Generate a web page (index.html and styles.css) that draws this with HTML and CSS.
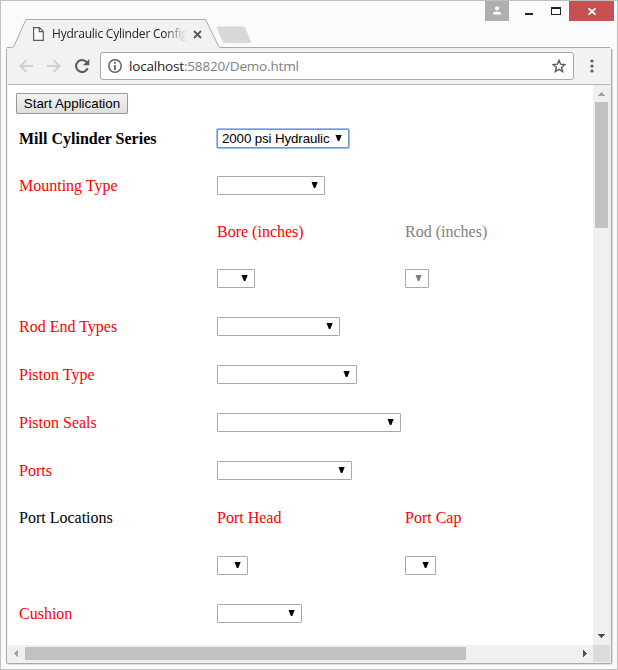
FILE: index.html
```html
<!DOCTYPE html>
<html lang="en">
<head>
<meta charset="utf-8">
<title>Hydraulic Cylinder Config</title>
<link rel="stylesheet" href="styles.css">
</head>
<body>
<svg class="defs" width="0" height="0"><symbol id="arrow" viewBox="0 0 7 7"><path d="M.5 0H6.700L4.300 6H2.900Z" fill="currentColor"/></symbol></svg>
<div class="window">
  <header class="titlebar">
    <svg class="tabshape" width="606" height="30" viewBox="0 0 606 30">
      <path d="M0 30V28.500H5.500Q7.500 28.500 8.500 26L20 .5H199.500L212.500 27Q213.200 28.500 215 28.500H606V30Z" fill="#f2f2f2"/>
      <path d="M1 28.500H5.500Q7.500 28.500 8.500 26L20 .5H199.500L212.500 27Q213.200 28.500 215 28.500H604" fill="none" stroke="#a9a9a9"/>
      <path d="M213 7.500H236Q238.500 7.500 239.500 9.500L244.500 22Q245 24 243.500 24H219.500Q217.500 24 216.500 22L211 9.500Q210.500 7.500 213 7.500Z" fill="#d8d8d8" stroke="#e6e6e6" stroke-width=".6"/>
    </svg>
    <div class="tab">
      <svg width="11" height="14" viewBox="0 0 11 14"><path d="M.6 .6H6.500L10.300 4.400V13.400H.6ZM6.300 .6V4.600H10.300" fill="#fafafa" stroke="#5a5a5a" stroke-width="1.200"/></svg>
      <span class="tabtitle">Hydraulic Cylinder Config</span>
      <svg width="9" height="9" viewBox="0 0 9 9"><path d="M1 1L8 8M8 1L1 8" stroke="#5a5a5a" stroke-width="1.900"/></svg>
    </div>
    <div class="controls">
      <span class="user"><svg width="8" height="9" viewBox="0 0 8 9"><circle cx="4" cy="2.200" r="2" fill="#fff"/><path d="M0 8.500V7Q.4 5.400 4 5.400T8 7V8.500Z" fill="#fff"/></svg></span>
      <span class="min"></span>
      <span class="max"></span>
      <span class="close"><svg width="8" height="7" viewBox="0 0 8 7"><path d="M.5 .3L7.500 6.700M7.500 .3L.5 6.700" stroke="#fff" stroke-width="1.800"/></svg></span>
    </div>
  </header>
  <div class="frame">
    <div class="toolbar">
      <svg class="back" width="14" height="14" viewBox="0 0 14 14"><path d="M14 7H1.500M7.500 1L1.500 7L7.500 13" fill="none" stroke="#d0d0d0" stroke-width="1.800"/></svg>
      <svg class="fwd" width="14" height="14" viewBox="0 0 14 14"><path d="M0 7H12.500M6.500 1L12.500 7L6.500 13" fill="none" stroke="#d0d0d0" stroke-width="1.800"/></svg>
      <svg class="reload" width="15" height="14" viewBox="0 0 15 14"><path d="M12.700 9.200A6 6 0 1 1 11.700 3.200" fill="none" stroke="#5a5a5a" stroke-width="2"/><path d="M14.300 0V6.300H8Z" fill="#5a5a5a"/></svg>
      <div class="address">
        <svg width="14" height="14" viewBox="0 0 14 14"><circle cx="7" cy="7" r="6.200" fill="none" stroke="#5a5a5a" stroke-width="1.400"/><path d="M7 3V4.700M7 6V11" stroke="#5a5a5a" stroke-width="1.700"/></svg>
        <span class="url"><b>localhost</b>:58820/Demo.html</span>
        <svg class="star" width="14" height="14" viewBox="0 0 14 14"><path d="M7 1.300L8.600 5.200L12.900 5.500L9.600 8.300L10.700 12.600L7 10.300L3.300 12.600L4.400 8.300L1.100 5.500L5.400 5.200Z" fill="none" stroke="#5a5a5a" stroke-width="1.400"/></svg>
      </div>
      <svg class="menu" width="4" height="14" viewBox="0 0 4 14" fill="#5a5a5a"><circle cx="2" cy="2" r="1.600"/><circle cx="2" cy="7" r="1.600"/><circle cx="2" cy="12" r="1.600"/></svg>
    </div>
    <div class="view">
      <main class="page">
        <button class="start">Start Application</button>
        <div class="form">
          <span class="head">Mill Cylinder Series</span><span class="select focus w132">2000 psi Hydraulic<svg><use href="#arrow"/></svg></span><i></i>
          <span class="req">Mounting Type</span><span class="select w108"><svg><use href="#arrow"/></svg></span><i></i>
          <i></i><span class="req">Bore (inches)</span><span class="off">Rod (inches)</span>
          <i></i><span class="select w38"><svg><use href="#arrow"/></svg></span><span class="select w24 off"><svg><use href="#arrow"/></svg></span>
          <span class="req">Rod End Types</span><span class="select w123"><svg><use href="#arrow"/></svg></span><i></i>
          <span class="req">Piston Type</span><span class="select w140"><svg><use href="#arrow"/></svg></span><i></i>
          <span class="req">Piston Seals</span><span class="select w184"><svg><use href="#arrow"/></svg></span><i></i>
          <span class="req">Ports</span><span class="select w135"><svg><use href="#arrow"/></svg></span><i></i>
          <span>Port Locations</span><span class="req">Port Head</span><span class="req">Port Cap</span>
          <i></i><span class="select w31"><svg><use href="#arrow"/></svg></span><span class="select w31"><svg><use href="#arrow"/></svg></span>
          <span class="req">Cushion</span><span class="select w85"><svg><use href="#arrow"/></svg></span><i></i>
        </div>
      </main>
      <div class="vbar"><svg width="7" height="4" shape-rendering="crispEdges"><path d="M0 4L3.500 0L7 4Z" fill="#a3a3a3"/></svg><div class="vthumb"></div><svg class="down" width="7" height="4" shape-rendering="crispEdges"><path d="M0 0H7L3.500 4Z" fill="#505050"/></svg></div>
      <div class="hbar"><svg width="4" height="7" shape-rendering="crispEdges"><path d="M4 0V7L0 3.500Z" fill="#a3a3a3"/></svg><div class="hthumb"></div><svg class="right" width="4" height="7" shape-rendering="crispEdges"><path d="M0 0V7L4 3.500Z" fill="#505050"/></svg></div>
      <div class="corner"></div>
    </div>
  </div>
</div>
</body>
</html>
```
FILE: styles.css
```css
* { box-sizing: border-box; }
body { margin: 0; background: #fbfbfb; }
svg { display: block; flex: none; }
.defs { position: absolute; }
.window { width: 618px; height: 670px; border: 1px solid #c0c0c0; padding: 0 5px; background: #fbfbfb; }
.titlebar { position: relative; height: 47px; display: flex; justify-content: space-between; }
.tabshape { position: absolute; left: 0; top: 18px; }
.tab { position: relative; display: flex; align-items: center; height: 20px; margin: 23px 0 0 27px; }
.tabtitle { width: 137px; margin: 0 4px 0 8px; white-space: nowrap; font: 12px/18px "Open Sans", sans-serif; letter-spacing: -.22px; color: #222; -webkit-mask-image: linear-gradient(90deg, #000 112px, transparent 135px); mask-image: linear-gradient(90deg, #000 112px, transparent 135px); }
.controls { display: flex; height: 20px; margin-right: -2px; }
.user { width: 24px; background: #afafaf; display: flex; justify-content: center; padding-top: 5px; }
.min { width: 8px; height: 2px; margin: 12px 0 0 16px; background: #222; }
.max { width: 10px; height: 8px; margin: 6px 0 0 18px; border: 1px solid #222; border-top-width: 2px; }
.close { width: 45px; margin-left: 8px; background: #c75050; display: flex; justify-content: center; align-items: center; padding-top: 1px; }
.frame { width: 606px; height: 616px; border: 1px solid #a9a9a9; border-top: 0; border-radius: 0 0 2px 2px; background: #f2f2f2; padding: 0 1px; box-shadow: 1px 1px 1px #ddd; }
.toolbar { height: 37px; border-bottom: 1px solid #b5b5b5; display: flex; align-items: center; }
.back { margin-left: 11px; }
.fwd { margin-left: 14px; }
.reload { margin-left: 14px; }
.address { display: flex; align-items: center; width: 474px; height: 28px; margin-left: 10px; padding: 0 7px; border: 1px solid #a9a9a9; border-radius: 3px; background: #fff; }
.url { margin-left: 7px; font: 13.5px/20px "Open Sans", sans-serif; color: #808080; letter-spacing: -.18px; }
.url b { font-weight: 400; color: #222; }
.star { margin-left: auto; }
.menu { margin-left: 16px; }
.view { display: grid; grid-template: 560px 18px / 585px 17px; }
.page { background: #fff; padding: 8px; }
.start { display: block; width: 112px; height: 21px; padding: 0; border: 1px solid #979797; border-radius: 1px; background: linear-gradient(#f3f3f3, #dedede); color: #000; font: 13.333px/18px "Liberation Sans", sans-serif; white-space: nowrap; }
.form { display: grid; grid-template-columns: 198px 188px 170px; grid-template-rows: 47px 47px 46px 47px 49px 47px 49px 47px 48px 47px 49px; align-items: center; margin: 1px 0 0 3px; font: 16px/18px "Liberation Serif", serif; color: #000; }
.head { font-weight: 700; }
.req { color: #f00; }
.off { color: #808080; }
.select { display: flex; align-items: center; justify-content: space-between; height: 19px; padding: 0 6px 0 4px; border: 1px solid #a9a9a9; border-radius: 1px; background: #fff; font: 13.333px/17px "Liberation Sans", sans-serif; letter-spacing: -.12px; white-space: nowrap; }
.select svg { width: 7px; height: 7px; margin-left: auto; }
.focus { border-color: #6d97dd; box-shadow: 0 0 0 1px #9dbcf3; }
.w132 { width: 132px; }
.w108 { width: 108px; }
.w38 { width: 38px; }
.w24 { width: 24px; }
.w123 { width: 123px; }
.w140 { width: 140px; }
.w184 { width: 184px; }
.w135 { width: 135px; }
.w31 { width: 31px; }
.w85 { width: 85px; }
.vbar, .hbar { background: #f0f0f0; display: flex; align-items: center; }
.vbar { flex-direction: column; padding: 7px 0; }
.vthumb { width: 13px; height: 126px; margin-top: 6px; background: #c1c1c1; }
.down { margin-top: auto; }
.hbar { padding: 0 6px; height: 17px; }
.hthumb { width: 441px; height: 13px; margin-left: 7px; background: #c1c1c1; }
.right { margin-left: auto; }
.corner { height: 17px; background: #dcdcdc; }
```
